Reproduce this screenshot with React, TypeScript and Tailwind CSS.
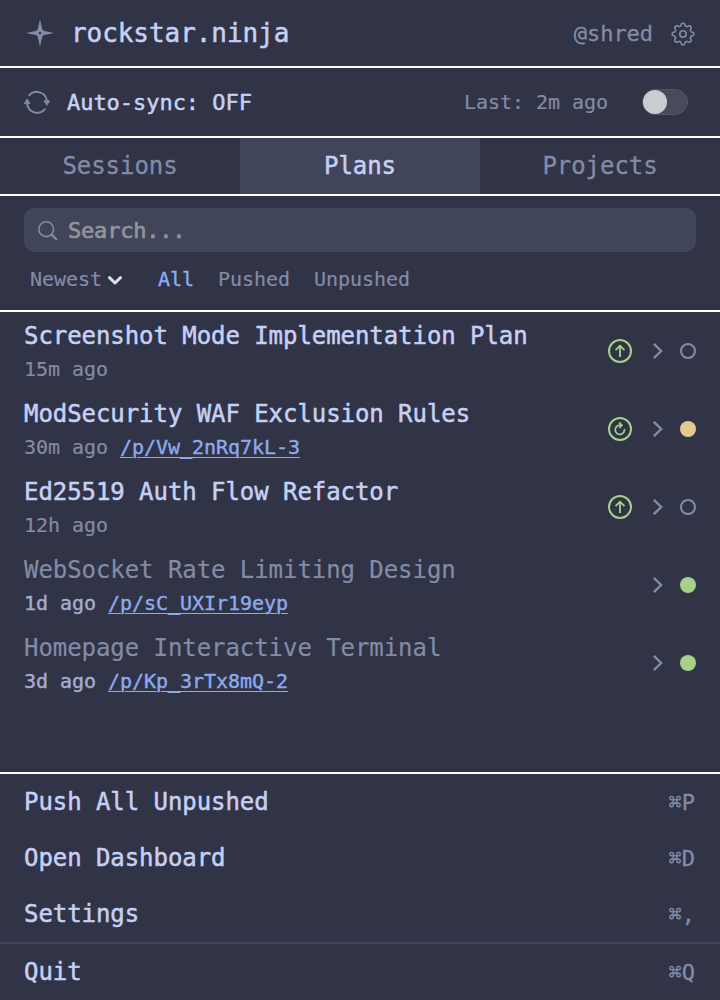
import React, { useState } from 'react';
import clsx from 'clsx';

type PlanStatus = 'unpushed' | 'modified' | 'pushed';

type Plan = {
  id: string;
  title: string;
  age: string;
  link?: string;
  status: PlanStatus;
};

const PLANS: Plan[] = [
  { id: 'screenshot', title: 'Screenshot Mode Implementation Plan', age: '15m ago', status: 'unpushed' },
  { id: 'modsec', title: 'ModSecurity WAF Exclusion Rules', age: '30m ago', link: '/p/Vw_2nRq7kL-3', status: 'modified' },
  { id: 'auth', title: 'Ed25519 Auth Flow Refactor', age: '12h ago', status: 'unpushed' },
  { id: 'rate-limit', title: 'WebSocket Rate Limiting Design', age: '1d ago', link: '/p/sC_UXIr19eyp', status: 'pushed' },
  { id: 'terminal', title: 'Homepage Interactive Terminal', age: '3d ago', link: '/p/Kp_3rTx8mQ-2', status: 'pushed' },
];

const TABS = ['Sessions', 'Plans', 'Projects'];
const FILTERS = ['All', 'Pushed', 'Unpushed'];

const ACTIONS = [
  { label: 'Push All Unpushed', shortcut: '⌘P' },
  { label: 'Open Dashboard', shortcut: '⌘D' },
  { label: 'Settings', shortcut: '⌘,' },
];

// Eight rounded teeth, traced as a softened square wave around a circle
const GEAR_OUTLINE = Array.from({ length: 160 }, (_, i) => {
  const a = (i / 160) * Math.PI * 2;
  const r = 9.5 + 1.3 * Math.tanh(1.8 * Math.cos(8 * a));
  return `${(12 + r * Math.cos(a)).toFixed(2)},${(12 + r * Math.sin(a)).toFixed(2)}`;
}).join(' ');

function StarIcon() {
  return (
    <svg width="28" height="28" viewBox="0 0 28 28" className="text-[#838ba7]">
      <path
        fill="currentColor"
        fillRule="evenodd"
        d="M14 0 L16.1 9.8 Q16.6 11.4 18.2 11.9 L28 14 L18.2 16.1 Q16.6 16.6 16.1 18.2 L14 28 L11.9 18.2 Q11.4 16.6 9.8 16.1 L0 14 L9.8 11.9 Q11.4 11.4 11.9 9.8 Z M14 12.7 A1.3 1.3 0 1 0 14 15.3 A1.3 1.3 0 1 0 14 12.7 Z"
      />
    </svg>
  );
}

function SyncIcon() {
  return (
    <svg width="26" height="26" viewBox="0 0 26 26" fill="none" stroke="currentColor" strokeWidth="1.8" strokeLinecap="round" className="text-[#838ba7]">
      <path d="M5.1 6.4 A10.2 10.2 0 0 1 22.9 11.5" />
      <path d="M20.9 20.2 A10.2 10.2 0 0 1 3.1 15" />
      <path d="M20.3 11.8 H25.7 L23 16 Z" fill="currentColor" strokeWidth="0.9" strokeLinejoin="round" />
      <path d="M5.7 14.6 H0.3 L3 10.3 Z" fill="currentColor" strokeWidth="0.9" strokeLinejoin="round" />
    </svg>
  );
}

function GearIcon() {
  return (
    <svg width="24" height="24" viewBox="0 0 24 24" fill="none" stroke="currentColor" strokeWidth="1.6" strokeLinejoin="round" className="mt-px text-[#838ba7]">
      <polygon points={GEAR_OUTLINE} />
      <circle cx="12" cy="12" r="3.2" />
    </svg>
  );
}

function SearchIcon() {
  return (
    <svg width="20" height="20" viewBox="0 0 20 20" fill="none" stroke="currentColor" strokeLinecap="round" className="mt-px text-[#838ba7]">
      <circle cx="8.2" cy="8.2" r="7.4" strokeWidth="1.6" />
      <path d="M13.6 13.6 L18.2 18.2" strokeWidth="2.2" />
    </svg>
  );
}

function PushIcon() {
  return (
    <svg width="24" height="24" viewBox="0 0 24 24" fill="none" stroke="currentColor" strokeWidth="2" className="text-[#a6d189]">
      <circle cx="12" cy="12" r="11" />
      <path d="M12 18 V7 M7.5 11.2 L12 6.8 L16.5 11.2" strokeWidth="1.8" />
    </svg>
  );
}

function RepushIcon() {
  return (
    <svg width="24" height="24" viewBox="0 0 24 24" fill="none" stroke="currentColor" strokeWidth="1.7" className="text-[#a6d189]">
      <circle cx="12" cy="12" r="11" strokeWidth="2" />
      <path d="M16.4 12 A4.6 4.6 0 1 1 11.8 8.2 H13.4" />
      <path d="M11.2 5.4 L13.9 8.2 L11.2 11" />
    </svg>
  );
}

function ChevronIcon() {
  return (
    <svg width="10" height="16" viewBox="0 0 10 16" fill="none" stroke="currentColor" strokeWidth="2.3" className="text-[#838ba7]">
      <path d="M0.8 0.8 L8.2 8 L0.8 15.2" />
    </svg>
  );
}

function PlanRow({ plan }: { plan: Plan }) {
  const pushed = plan.status === 'pushed';
  return (
    <li className="flex h-[78px] items-center justify-between">
      <div>
        <div
          className={clsx(
            'text-2xl leading-9 tracking-[-0.06px]',
            pushed ? 'text-[#838ba7] [-webkit-text-stroke:0.2px]' : 'text-[#c6d0f5] [-webkit-text-stroke:0.5px]'
          )}
        >
          {plan.title}
        </div>
        <div className="flex gap-3 text-xl leading-[30px] tracking-[-0.04px]">
          <span
            className={
              pushed ? 'text-[#a5adce] [-webkit-text-stroke:0.4px]' : 'text-[#838ba7] [-webkit-text-stroke:0.2px]'
            }
          >
            {plan.age}
          </span>
          {plan.link && (
            <a href="#" className="text-[#8caaee] underline decoration-1 underline-offset-[3px] [-webkit-text-stroke:0.4px]">
              {plan.link}
            </a>
          )}
        </div>
      </div>
      <div className="flex items-center">
        {plan.status === 'unpushed' && <PushIcon />}
        {plan.status === 'modified' && <RepushIcon />}
        <span className="mr-[17px] ml-[21px]">
          <ChevronIcon />
        </span>
        <span
          className={clsx(
            'size-4 rounded-full',
            plan.status === 'unpushed' && 'border-2 border-[#838ba7]',
            plan.status === 'modified' && 'bg-[#e5c890]',
            pushed && 'bg-[#a6d189]'
          )}
        />
      </div>
    </li>
  );
}

function ActionRow({ label, shortcut }: { label: string; shortcut: string }) {
  return (
    <button className="flex h-14 w-full items-center justify-between pr-[25px] pl-6 text-left">
      <span className="text-2xl tracking-[-0.06px] text-[#c6d0f5] [-webkit-text-stroke:0.5px]">{label}</span>
      <span className="text-[22px] tracking-[-0.04px] text-[#838ba7] [-webkit-text-stroke:0.3px]">{shortcut}</span>
    </button>
  );
}

export default function App() {
  const [tab, setTab] = useState('Plans');
  const [filter, setFilter] = useState('All');
  const [autoSync, setAutoSync] = useState(false);

  return (
    <div className="flex h-[1000px] w-[720px] flex-col overflow-hidden bg-[#303446] font-['DejaVu_Sans_Mono',monospace] whitespace-nowrap">
      <header className="flex h-[68px] items-center justify-between border-b-2 border-white pr-[25px] pl-[26px]">
        <div className="flex items-center gap-[17px]">
          <StarIcon />
          <h1 className="text-[26px] leading-8 tracking-[-0.06px] text-[#c6d0f5] [-webkit-text-stroke:0.5px]">rockstar.ninja</h1>
        </div>
        <div className="flex items-center gap-[18px]">
          <span className="text-[22px] tracking-[-0.04px] text-[#838ba7] [-webkit-text-stroke:0.3px]">@shred</span>
          <GearIcon />
        </div>
      </header>

      <div className="flex h-[70px] items-center justify-between border-b-2 border-white pr-8 pl-6">
        <div className="flex items-center gap-[17px]">
          <SyncIcon />
          <span className="text-[22px] tracking-[-0.04px] text-[#c6d0f5] [-webkit-text-stroke:0.5px]">
            Auto-sync: {autoSync ? 'ON' : 'OFF'}
          </span>
        </div>
        <div className="flex items-center gap-[34px]">
          <span className="text-xl tracking-[-0.04px] text-[#838ba7] [-webkit-text-stroke:0.2px]">Last: 2m ago</span>
          <button
            role="switch"
            aria-checked={autoSync}
            onClick={() => setAutoSync(!autoSync)}
            className={clsx(
              'flex h-[26px] w-[46px] items-center rounded-full border border-[#545765] bg-[#484b5a]',
              autoSync && 'justify-end'
            )}
          >
            <span className="size-6 rounded-full bg-[#cbccd1]" />
          </button>
        </div>
      </div>

      <nav className="grid h-[58px] grid-cols-3 border-b-2 border-white">
        {TABS.map((name) => (
          <button
            key={name}
            onClick={() => setTab(name)}
            className={clsx(
              'text-2xl tracking-[-0.06px]',
              tab === name
                ? 'bg-[#414559] text-[#c6d0f5] [-webkit-text-stroke:0.5px]'
                : 'text-[#838ba7] [-webkit-text-stroke:0.3px]'
            )}
          >
            {name}
          </button>
        ))}
      </nav>

      <div className="h-[116px] border-b-2 border-white px-6 pt-3">
        <label className="flex h-11 items-center gap-[10px] rounded-[10px] bg-[#414559] px-[14px]">
          <SearchIcon />
          <input
            placeholder="Search..."
            className="mt-px min-w-0 flex-1 bg-transparent text-[22px] leading-8 tracking-[-0.2px] text-[#c6d0f5] outline-none [-webkit-text-stroke:0.7px] placeholder:text-[#929499]"
          />
        </label>
        <div className="mt-3 flex h-[30px] items-center pl-1.5 text-xl tracking-[-0.04px] text-[#838ba7] [-webkit-text-stroke:0.2px]">
          <button className="mr-9 flex items-center gap-1.5">
            Newest
            <svg width="14" height="9" viewBox="0 0 14 9" fill="none" stroke="#dfe0e4" strokeWidth="2.9" strokeLinecap="round" strokeLinejoin="round" className="mt-0.5">
              <path d="M1.5 1.6 L7 7 L12.5 1.6" />
            </svg>
          </button>
          <div className="flex gap-6">
            {FILTERS.map((name) => (
              <button
                key={name}
                onClick={() => setFilter(name)}
                className={clsx(filter === name && 'text-[#8caaee] [-webkit-text-stroke:0.4px]')}
              >
                {name}
              </button>
            ))}
          </div>
        </div>
      </div>

      <ul className="h-[462px] border-b-2 border-white px-6">
        {PLANS.map((plan) => (
          <PlanRow key={plan.id} plan={plan} />
        ))}
      </ul>

      <footer>
        {ACTIONS.map((action) => (
          <ActionRow key={action.label} {...action} />
        ))}
        <div className="border-t-2 border-[#414559]">
          <ActionRow label="Quit" shortcut="⌘Q" />
        </div>
      </footer>
    </div>
  );
}
